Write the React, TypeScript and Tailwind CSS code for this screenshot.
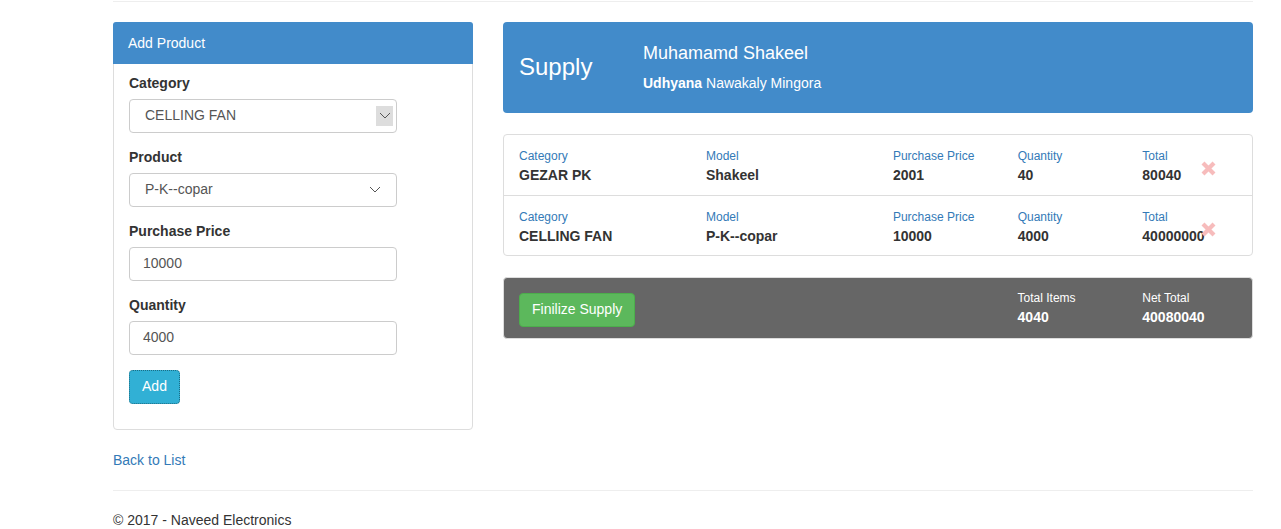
const items = [
  { category: "GEZAR PK", model: "Shakeel", price: "2001", qty: "40", total: "80040" },
  { category: "CELLING FAN", model: "P-K--copar", price: "10000", qty: "4000", total: "40000000" },
];

function Chevron() {
  return (
    <svg width="12" height="7" viewBox="0 0 12 7" fill="none">
      <path d="M1 1l5 5 5-5" stroke="#555" strokeWidth="1" />
    </svg>
  );
}

function RemoveIcon() {
  return (
    <svg width="17" height="17" viewBox="0 0 17 17">
      <path d="M3 3l11 11M14 3L3 14" stroke="#f7bcbc" strokeWidth="4.2" strokeLinecap="butt" />
    </svg>
  );
}

export default function App() {
  return (
    <div className="min-h-[529px] bg-white font-['Liberation_Sans',Arial,sans-serif] text-[14px] text-[#333] leading-[1.42857]">
      <div className="ml-[113px] w-[1140px]">
        <div className="border-t border-[#eee] mt-[1px]" />

        <div className="mt-[20px] flex gap-[30px]">
          {/* add product panel */}
          <div className="w-[360px] h-[408px] border border-[#ddd] rounded-[4px]">
            <div className="h-[42px] bg-[#428bca] rounded-t-[3px] px-[15px] pt-[12px] text-white -mx-px -mt-px">Add Product</div>
            <div className="px-[15px] pt-[10px]">
              <label className="block font-bold mb-[5px]">Category</label>
              <div className="w-[268px] h-[34px] border border-[#ccc] rounded-[4px] flex items-center justify-between pl-[15px] pr-[3px] text-[#555]">
                <span>CELLING FAN</span>
                <span className="w-[17px] h-[20px] bg-[#ddd] flex items-center justify-center"><Chevron /></span>
              </div>
              <label className="block font-bold mt-[15px] mb-[5px]">Product</label>
              <div className="w-[268px] h-[34px] border border-[#ccc] rounded-[4px] flex items-center justify-between pl-[15px] pr-[15px] text-[#555]">
                <span>P-K--copar</span>
                <Chevron />
              </div>
              <label className="block font-bold mt-[15px] mb-[5px]">Purchase Price</label>
              <div className="w-[268px] h-[34px] border border-[#ccc] rounded-[4px] flex items-center px-[13px] text-[#555]">10000</div>
              <label className="block font-bold mt-[15px] mb-[5px]">Quantity</label>
              <div className="w-[268px] h-[34px] border border-[#ccc] rounded-[4px] flex items-center px-[13px] text-[#555]">4000</div>
              <button className="mt-[15px] w-[51px] h-[34px] bg-[#31b0d5] border border-[#1b6d85] border-dotted rounded-[4px] text-white">Add</button>
            </div>
          </div>

          {/* supply side */}
          <div className="w-[750px]">
            <div className="h-[91px] bg-[#428bca] rounded-[4px] flex items-center text-white">
              <div className="w-[140px] pl-[16px] text-[24px]">Supply</div>
              <div className="pt-[3px]">
                <div className="text-[18px] leading-[1.1]">Muhamamd Shakeel</div>
                <div className="mt-[10px]"><span className="font-bold">Udhyana</span> Nawakaly Mingora</div>
              </div>
            </div>

            <div className="mt-[21px] border border-[#ddd] rounded-[4px]">
              {items.map((it, i) => (
                <div key={i} className={`relative h-[60px] flex pt-[14px] ${i > 0 ? "border-t border-[#ddd]" : ""}`}>
                  <div className="w-[187.5px] px-[15px]">
                    <div className="text-[12px] text-[#337ab7] leading-[14px]">Category</div>
                    <div className="font-bold mt-[3px]">{it.category}</div>
                  </div>
                  <div className="w-[187.5px] px-[15px]">
                    <div className="text-[12px] text-[#337ab7] leading-[14px]">Model</div>
                    <div className="font-bold mt-[3px]">{it.model}</div>
                  </div>
                  <div className="w-[125px] px-[15px]">
                    <div className="text-[12px] text-[#337ab7] leading-[14px]">Purchase Price</div>
                    <div className="font-bold mt-[3px]">{it.price}</div>
                  </div>
                  <div className="w-[125px] px-[15px]">
                    <div className="text-[12px] text-[#337ab7] leading-[14px]">Quantity</div>
                    <div className="font-bold mt-[3px]">{it.qty}</div>
                  </div>
                  <div className="w-[125px] px-[15px]">
                    <div className="text-[12px] text-[#337ab7] leading-[14px]">Total</div>
                    <div className="font-bold mt-[3px]">{it.total}</div>
                  </div>
                  <span className="absolute left-[696px] top-[25px]"><RemoveIcon /></span>
                </div>
              ))}
            </div>

            <div className="mt-[21px] h-[62px] bg-[#666] rounded-[4px] border border-[#ddd] flex items-center text-white">
              <div className="w-[500px] pl-[15px] pt-[3px]">
                <button className="h-[34px] px-[12px] bg-[#5cb85c] border border-[#4cae4c] rounded-[4px] text-white">Finilize Supply</button>
              </div>
              <div className="w-[125px] px-[15px] pt-[2px]">
                <div className="text-[12px] leading-[14px]">Total Items</div>
                <div className="font-bold mt-[3px]">4040</div>
              </div>
              <div className="w-[125px] px-[15px] pt-[2px]">
                <div className="text-[12px] leading-[14px]">Net Total</div>
                <div className="font-bold mt-[3px]">40080040</div>
              </div>
            </div>
          </div>
        </div>

        <div className="mt-[21px]">
          <a className="text-[#337ab7]">Back to List</a>
        </div>
        <div className="mt-[19px] border-t border-[#eee]" />
        <div className="mt-[20px]">© 2017 - Naveed Electronics</div>
      </div>
    </div>
  );
}
